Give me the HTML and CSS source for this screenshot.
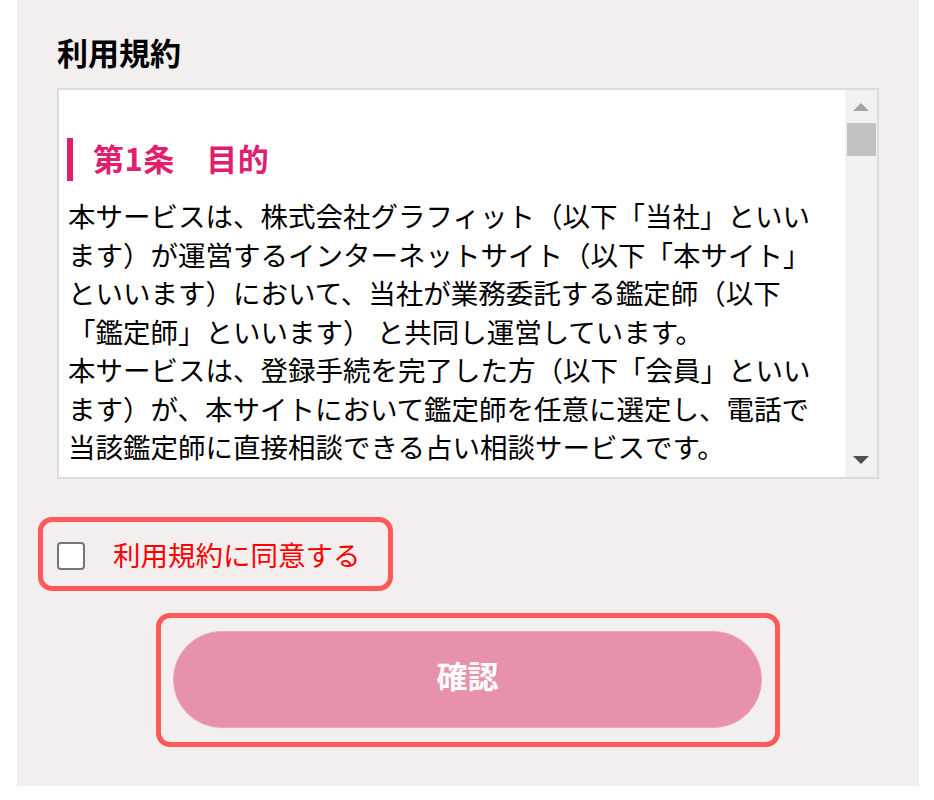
FILE: index.html
```html
<!DOCTYPE html>
<html lang="ja">
<head>
<meta charset="utf-8">
<title>利用規約</title>
<link rel="stylesheet" href="styles.css">
</head>
<body>
<div class="panel">
  <h2 class="title">利用規約</h2>
  <div class="terms">
    <div class="terms-body">
      <h3 class="article">第1条　目的</h3>
      <p class="text">本サービスは、株式会社グラフィット（以下「当社」といいます）が運営するインターネットサイト（以下「本サイト」といいます）において、当社が業務委託する鑑定師（以下「鑑定師」といいます） と共同し運営しています。<br>本サービスは、登録手続を完了した方（以下「会員」といいます）が、本サイトにおいて鑑定師を任意に選定し、電話で当該鑑定師に直接相談できる占い相談サービスです。</p>
    </div>
    <div class="scrollbar">
      <div class="sb-btn"><span class="arrow-up"></span></div>
      <div class="sb-thumb"></div>
      <div class="sb-track"></div>
      <div class="sb-btn"><span class="arrow-down"></span></div>
    </div>
  </div>
  <label class="agree">
    <span class="checkbox"></span>
    <span class="agree-text">利用規約に同意する</span>
  </label>
  <div class="submit-wrap">
    <button class="submit" type="button">確認</button>
  </div>
</div>
</body>
</html>
```
FILE: styles.css
```css
html, body {
  margin: 0;
  padding: 0;
  background: #ffffff;
}
body {
  font-family: "Noto Sans CJK JP", "Noto Sans", sans-serif;
  color: #000;
}
.panel {
  margin-left: 17px;
  width: 902px;
  box-sizing: border-box;
  background: #f2efee;
  padding: 34px 40px 39px 40px;
  display: flex;
  flex-direction: column;
}
.title {
  margin: 0 0 18px 0;
  font-size: 31px;
  line-height: 36px;
  font-weight: 700;
}
.terms {
  height: 391px;
  box-sizing: border-box;
  border: 2px solid #dcdcdc;
  background: #ffffff;
  display: flex;
}
.terms-body {
  flex: 1;
  overflow: hidden;
  padding: 48px 20px 0 9px;
}
.article {
  margin: 0 0 15px -1px;
  border-left: 6px solid #e0206e;
  padding-left: 20px;
  height: 43px;
  line-height: 40px;
  font-size: 31px;
  font-weight: 700;
  color: #e0206e;
  letter-spacing: 0.5px;
}
.text {
  margin: 0;
  font-size: 27.5px;
  line-height: 38.5px;
  line-break: strict;
}
.scrollbar {
  width: 32px;
  background: #f1f1f1;
  display: flex;
  flex-direction: column;
}
.sb-btn {
  height: 33px;
  display: flex;
  align-items: center;
  justify-content: center;
}
.sb-btn:last-child {
  height: 34px;
}
.arrow-up {
  width: 0;
  height: 0;
  border-left: 8px solid transparent;
  border-right: 8px solid transparent;
  border-bottom: 8px solid #a3a3a3;
}
.arrow-down {
  width: 0;
  height: 0;
  border-left: 8px solid transparent;
  border-right: 8px solid transparent;
  border-top: 8px solid #505050;
}
.sb-thumb {
  height: 33px;
  margin: 0 1px 0 2px;
  background: #c1c1c1;
}
.sb-track {
  flex: 1;
}
.agree {
  align-self: flex-start;
  margin: 38px 0 0 -19px;
  box-sizing: border-box;
  height: 74px;
  border: 5px solid #ff5a5a;
  border-radius: 14px;
  padding: 0 27px 0 14px;
  display: flex;
  align-items: center;
  gap: 28px;
}
.checkbox {
  width: 28px;
  height: 28px;
  box-sizing: border-box;
  border: 2px solid #767676;
  border-radius: 4px;
  background: #ffffff;
  margin-top: 3px;
}
.agree-text {
  font-size: 27.5px;
  line-height: 36px;
  color: #ff0000;
}
.submit-wrap {
  align-self: center;
  margin-top: 22px;
  width: 624px;
  height: 134px;
  box-sizing: border-box;
  border: 5px solid #ff5a5a;
  border-radius: 14px;
  padding: 13px 13px 14px 12px;
  display: flex;
}
.submit {
  flex: 1;
  border: 1px solid #eba3b8;
  border-radius: 49px;
  background: #e891ab;
  color: #ffffff;
  font-family: "Noto Sans CJK JP", "Noto Sans", sans-serif;
  font-size: 31px;
  line-height: 1;
  font-weight: 700;
  padding: 0 0 11px 0;
}
```
